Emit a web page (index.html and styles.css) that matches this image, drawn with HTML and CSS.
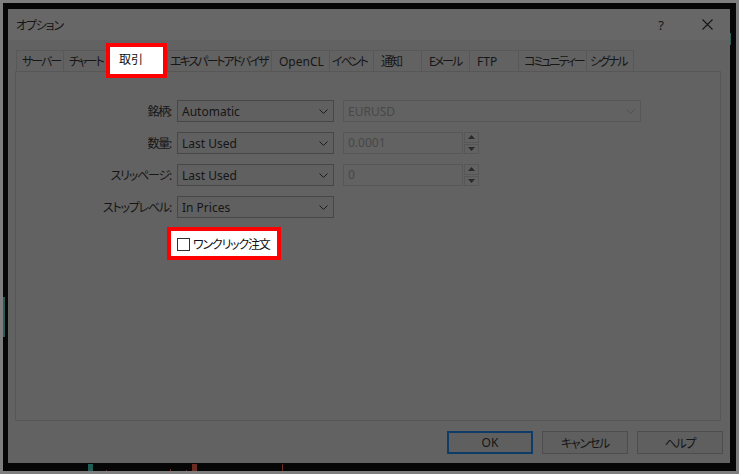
FILE: index.html
```html
<!DOCTYPE html>
<html lang="ja">
<head>
<meta charset="utf-8">
<title>オプション</title>
<link rel="stylesheet" href="styles.css">
</head>
<body>
<div class="screen">
  <div class="frame">
    <div class="dialog">
      <div class="titlebar">
        <span class="title ja">オプション</span>
        <div class="caption-btns">
          <span class="cap-btn">?</span>
          <span class="cap-btn">
            <svg width="11" height="11" viewBox="0 0 11 11"><path d="M0.5 0.5 L10.5 10.5 M10.5 0.5 L0.5 10.5" stroke="#161616" stroke-width="1.1" fill="none"/></svg>
          </span>
        </div>
      </div>
      <div class="content">
        <div class="tabs">
          <div class="tab ja t-server">サーバー</div>
          <div class="tab ja t-chart">チャート</div>
          <div class="tab ja active">取引</div>
          <div class="tab ja t-ea">エキスパートアドバイザ</div>
          <div class="tab t-opencl">OpenCL</div>
          <div class="tab ja t-event">イベント</div>
          <div class="tab ja t-notify">通知</div>
          <div class="tab ja t-mail">Eメール</div>
          <div class="tab t-ftp">FTP</div>
          <div class="tab ja t-community">コミュニティー</div>
          <div class="tab ja t-signal last">シグナル</div>
        </div>
        <div class="panel">
          <div class="form">
            <div class="row">
              <span class="lbl ja">銘柄:</span>
              <div class="combo"><span>Automatic</span><svg class="chev" width="9" height="5" viewBox="0 0 9 5"><path d="M0.5 0.5 L4.5 4.5 L8.5 0.5" stroke="#1c1c1c" fill="none"/></svg></div>
              <div class="combo wide disabled"><span>EURUSD</span><svg class="chev" width="9" height="5" viewBox="0 0 9 5"><path d="M0.5 0.5 L4.5 4.5 L8.5 0.5" stroke="#505050" fill="none"/></svg></div>
            </div>
            <div class="row">
              <span class="lbl ja">数量:</span>
              <div class="combo"><span>Last Used</span><svg class="chev" width="9" height="5" viewBox="0 0 9 5"><path d="M0.5 0.5 L4.5 4.5 L8.5 0.5" stroke="#1c1c1c" fill="none"/></svg></div>
              <div class="spin-input">0.0001</div>
              <div class="spin-btns">
                <span class="spin-btn"><svg width="7" height="4" viewBox="0 0 7 4"><path d="M0 4 L3.5 0 L7 4 Z" fill="#2a2a2a"/></svg></span>
                <span class="spin-btn"><svg width="7" height="4" viewBox="0 0 7 4"><path d="M0 0 L3.5 4 L7 0 Z" fill="#2a2a2a"/></svg></span>
              </div>
            </div>
            <div class="row">
              <span class="lbl ja">スリッページ:</span>
              <div class="combo"><span>Last Used</span><svg class="chev" width="9" height="5" viewBox="0 0 9 5"><path d="M0.5 0.5 L4.5 4.5 L8.5 0.5" stroke="#1c1c1c" fill="none"/></svg></div>
              <div class="spin-input">0</div>
              <div class="spin-btns">
                <span class="spin-btn"><svg width="7" height="4" viewBox="0 0 7 4"><path d="M0 4 L3.5 0 L7 4 Z" fill="#2a2a2a"/></svg></span>
                <span class="spin-btn"><svg width="7" height="4" viewBox="0 0 7 4"><path d="M0 0 L3.5 4 L7 0 Z" fill="#2a2a2a"/></svg></span>
              </div>
            </div>
            <div class="row">
              <span class="lbl ja">ストップレベル:</span>
              <div class="combo"><span>In Prices</span><svg class="chev" width="9" height="5" viewBox="0 0 9 5"><path d="M0.5 0.5 L4.5 4.5 L8.5 0.5" stroke="#1c1c1c" fill="none"/></svg></div>
            </div>
          </div>
          <div class="oneclick"><span class="cb"></span><span class="cb-label ja">ワンクリック注文</span></div>
        </div>
        <div class="buttons">
          <div class="btn default">OK</div>
          <div class="btn ja">キャンセル</div>
          <div class="btn ja">ヘルプ</div>
        </div>
      </div>
    </div>
  </div>
  <span class="mark m-left"></span>
  <span class="mark m-right"></span>
  <span class="mark m-green"></span>
  <span class="mark m-red1"></span>
  <span class="mark m-red2"></span>
  <span class="mark m-red3"></span>
  <span class="mark m-redblock"></span>
  <span class="mark m-red4"></span>
</div>
</body>
</html>
```

FILE: styles.css
```css
* { box-sizing: border-box; }
html, body { margin: 0; padding: 0; }
body {
  width: 739px;
  height: 474px;
  overflow: hidden;
  font-family: "Noto Sans", "Noto Sans CJK JP", sans-serif;
  font-size: 12px;
  font-feature-settings: "palt";
  color: #161616;
}
.ja { letter-spacing: -1.2px; }
.screen {
  position: relative;
  width: 739px;
  height: 474px;
  background: #7e7e7e;
  padding: 3px;
}
.frame {
  width: 733px;
  height: 468px;
  background: #060606;
  padding: 6px 6px 8px 5px;
}
.dialog {
  width: 722px;
  height: 454px;
  background: #626262;
  display: flex;
  flex-direction: column;
}
.titlebar {
  height: 31px;
  flex: none;
  background: #676767;
  display: flex;
  align-items: center;
  padding-left: 8px;
}
.title { flex: 1; }
.caption-btns { display: flex; }
.cap-btn {
  width: 46px;
  height: 31px;
  display: flex;
  align-items: center;
  justify-content: center;
  font-size: 13px;
}
.content {
  flex: 1;
  padding: 10px 9px 9px 7px;
  display: flex;
  flex-direction: column;
}
.tabs {
  height: 21px;
  flex: none;
  display: flex;
  align-items: flex-start;
  padding-left: 1px;
}
.tab {
  height: 21px;
  border: 1px solid #585858;
  border-right: none;
  border-bottom: none;
  padding-left: 7px;
  line-height: 21px;
  white-space: nowrap;
}
.tab.ja { letter-spacing: -2px; padding-left: 5px; }
.tab.last { border-right: 1px solid #585858; }
.t-server { width: 47px; }
.t-chart { width: 43px; }
.tab.t-ea { width: 104px; padding-left: 2px; }
.t-opencl { width: 58px; }
.tab.t-event { width: 44px; padding-left: 2px; }
.tab.t-notify { width: 48px; padding-left: 7px; }
.tab.t-mail { width: 48px; padding-left: 7px; }
.t-ftp { width: 49px; }
.t-community { width: 68px; }
.tab.t-signal { width: 48px; padding-left: 3px; }
.tab.active {
  position: relative;
  z-index: 2;
  width: 61px;
  height: 35px;
  margin-top: -7px;
  border: 4px solid #ff0000;
  background: #ffffff;
  padding-left: 9px;
  line-height: 25px;
  letter-spacing: 0;
  color: #111;
}
.panel {
  height: 350px;
  flex: none;
  border: 1px solid #575757;
  padding-top: 28px;
  padding-left: 0;
}
.form {
  display: flex;
  flex-direction: column;
  gap: 10px;
}
.row {
  display: flex;
  align-items: center;
  height: 22px;
}
.lbl {
  width: 155px;
  text-align: right;
  margin-right: 6px;
  white-space: nowrap;
}
.combo {
  width: 157px;
  height: 22px;
  border: 1px solid #474747;
  background: #606060;
  display: flex;
  align-items: center;
  justify-content: space-between;
  padding: 0 4px 0 4px;
}
.combo .chev { margin-right: 1px; }
.combo.wide {
  width: 298px;
  margin-left: 9px;
}
.combo.disabled {
  border-color: #575757;
  background: #626262;
  color: #484848;
}
.spin-input {
  width: 120px;
  height: 22px;
  margin-left: 9px;
  border: 1px solid #575757;
  color: #484848;
  padding-left: 4px;
  line-height: 20px;
}
.spin-btns {
  display: flex;
  flex-direction: column;
  gap: 1px;
  margin-left: 1px;
  height: 22px;
}
.spin-btn {
  width: 15px;
  height: 10.5px;
  border: 1px solid #575757;
  display: flex;
  align-items: center;
  justify-content: center;
}
.oneclick {
  margin-top: 9px;
  margin-left: 151px;
  width: 114px;
  height: 33px;
  border: 4px solid #ff0000;
  background: #ffffff;
  display: flex;
  align-items: center;
  padding-left: 6px;
  color: #111;
}
.cb {
  width: 13px;
  height: 13px;
  border: 1px solid #333;
  background: #fff;
  margin-right: 3px;
  margin-top: 2px;
  flex: none;
}
.cb-label { white-space: nowrap; }
.buttons {
  margin-top: 10px;
  margin-right: -2px;
  display: flex;
  justify-content: flex-end;
  gap: 9px;
}
.btn {
  width: 86px;
  height: 23px;
  border: 1px solid #4d4d4d;
  background: #5f5f5f;
  display: flex;
  align-items: center;
  justify-content: center;
}
.btn.default { border: 2px solid #0e3c68; }
.mark { position: absolute; display: block; }
.m-left { left: 3px; top: 297px; width: 2px; height: 40px; background: #2a5b56; }
.m-right { left: 730px; top: 33px; width: 1px; height: 12px; background: #2a5b56; }
.m-green { left: 88px; top: 464px; width: 5px; height: 7px; background: #1f5c55; }
.m-red1 { left: 106px; top: 470px; width: 1px; height: 1px; background: #6b2a20; }
.m-red2 { left: 170px; top: 469px; width: 1px; height: 2px; background: #6b2a20; }
.m-red3 { left: 186px; top: 470px; width: 1px; height: 1px; background: #6b2a20; }
.m-redblock { left: 192px; top: 464px; width: 5px; height: 7px; background: #6b2a20; }
.m-red4 { left: 282px; top: 464px; width: 1px; height: 7px; background: #6b2a20; }
```
